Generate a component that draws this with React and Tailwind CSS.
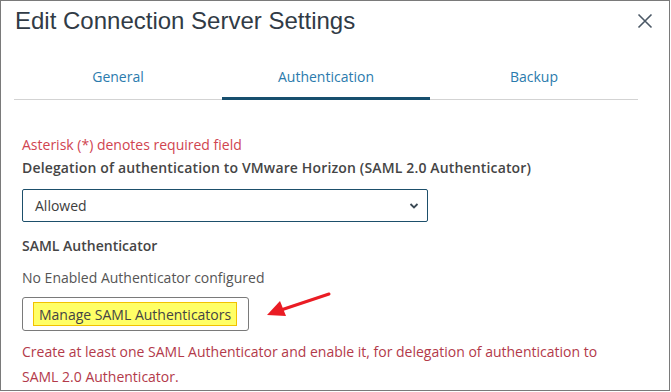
import React from "react";

export default function App() {
  const body = { fontFamily: '"Open Sans", "Noto Sans", sans-serif' };
  return (
    <div className="w-[671px] h-[392px] bg-white overflow-hidden">
      <div className="relative w-[670px] h-[391px] border border-[#7a7a7a] bg-white" style={body}>
        {/* header */}
        <div className="flex items-start justify-between pl-[14px] pr-[16px] pt-[4px]">
          <h1
            className="text-[24px] leading-[32px] text-[#313b46]"
            style={{ fontFamily: '"Liberation Sans", Arial, sans-serif' }}
          >
            Edit Connection Server Settings
          </h1>
          <svg width="16" height="16" viewBox="0 0 16 16" className="mt-[8px]">
            <path d="M1.5 1.5 L14.5 14.5 M14.5 1.5 L1.5 14.5" stroke="#4b5866" strokeWidth="1.6" fill="none" />
          </svg>
        </div>

        {/* tabs */}
        <div className="ml-[13px] w-[624px] mt-[29px] flex border-b border-[#d3d3d3] h-[34px]">
          <div className="flex-1 flex justify-center text-[14px] leading-[20px] text-[#2b7bad] pt-[1px]">General</div>
          <div className="flex-1 flex justify-center text-[14px] leading-[20px] text-[#2b7bad] pt-[1px] border-b-[3px] border-[#174f6e] -mb-[1px]">
            Authentication
          </div>
          <div className="flex-1 flex justify-center text-[14px] leading-[20px] text-[#2b7bad] pt-[1px]">Backup</div>
        </div>

        {/* content */}
        <div className="pl-[21px] pt-[35px] flex flex-col">
          <div className="text-[14px] leading-[20px] text-[#d0444f]">Asterisk (*) denotes required field</div>
          <div className="text-[14px] leading-[20px] text-[#454545] font-semibold mt-[3px] tracking-[0.15px]">
            Delegation of authentication to VMware Horizon (SAML 2.0 Authenticator)
          </div>
          <div className="mt-[11px] w-[406px] h-[33px] border border-[#1d4f6b] rounded-[2px] flex items-center justify-between pl-[12px] pr-[8px]">
            <span className="text-[14px] text-[#3d3d3d]">Allowed</span>
            <svg width="10" height="8" viewBox="0 0 10 8">
              <path d="M1.5 2 L5 5.5 L8.5 2" stroke="#3b4a55" strokeWidth="1.8" fill="none" />
            </svg>
          </div>
          <div className="mt-[14px] text-[14px] leading-[20px] text-[#454545] font-semibold">SAML Authenticator</div>
          <div className="mt-[12px] text-[14px] leading-[20px] text-[#555555]">No Enabled Authenticator configured</div>
          <div className="mt-[9px] w-[227px] h-[34px] border border-[#7a7a7a] rounded-[3px] flex items-center pl-[10px]">
            <span className="bg-[#ffff66] border border-[#f2c200] h-[24px] px-[5px] flex items-center text-[14px] text-[#444444]">
              Manage SAML Authenticators
            </span>
          </div>
          <div className="mt-[8px] text-[14px] leading-[25px] text-[#b33a4a] w-[620px]">
            Create at least one SAML Authenticator and enable it, for delegation of authentication to
            <br />
            SAML 2.0 Authenticator.
          </div>
        </div>

        {/* arrow */}
        <svg className="absolute left-[262px] top-[288px]" width="72" height="32" viewBox="0 0 72 32">
          <path d="M66 5 L18 21" stroke="#ea1c24" strokeWidth="3" strokeLinecap="round" fill="none" />
          <path d="M4 26 L17 12 L23 27 Z" fill="#ea1c24" />
        </svg>
      </div>
    </div>
  );
}
